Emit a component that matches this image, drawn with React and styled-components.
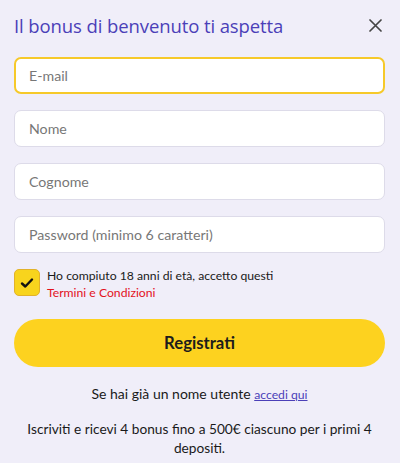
import React, { useState } from "react";
import styled, { createGlobalStyle } from "styled-components";

const GlobalStyle = createGlobalStyle`
  html, body {
    margin: 0;
    padding: 0;
    background: #f0eef9;
  }
  * {
    box-sizing: border-box;
  }
`;

const Container = styled.div`
  display: flex;
  flex-direction: column;
  width: 400px;
  min-height: 463px;
  padding: 11px 15px 0 14px;
  font-family: Lato, "Open Sans", sans-serif;
  background: #f0eef9;
  color: #1a1a1a;
`;

const Header = styled.div`
  display: flex;
  align-items: center;
  justify-content: space-between;
  height: 28px;
  margin-bottom: 18px;
`;

const Title = styled.h2`
  margin: 0;
  font-family: "Open Sans", sans-serif;
  font-size: 18.5px;
  font-weight: 400;
  color: #4b3fb8;
  letter-spacing: -0.1px;
`;

const CloseBtn = styled.button`
  display: flex;
  align-items: center;
  justify-content: center;
  width: 22px;
  height: 22px;
  padding: 0;
  margin-right: -1px;
  border: none;
  background: none;
  cursor: pointer;
`;

const Fields = styled.div`
  display: flex;
  flex-direction: column;
  gap: 16px;
`;

const Input = styled.input`
  width: 100%;
  height: 37px;
  padding: 0 14px;
  border-radius: 7px;
  border: ${(p) => (p.$active ? "2px solid #f6c92a" : "1px solid #dddbe9")};
  padding-left: ${(p) => (p.$active ? "13px" : "14px")};
  background: #fff;
  font-family: inherit;
  font-size: 14.2px;
  color: #333;
  outline: none;

  &::placeholder {
    color: #777;
  }
`;

const CheckRow = styled.label`
  display: flex;
  align-items: flex-start;
  gap: 7px;
  margin-top: 16px;
  cursor: pointer;
`;

const CheckBox = styled.span`
  display: flex;
  align-items: center;
  justify-content: center;
  flex: 0 0 26px;
  width: 26px;
  height: 27px;
  border-radius: 5px;
  border: 1px solid #e2b22a;
  background: ${(p) => (p.$checked ? "#f8d41d" : "#fff")};
`;

const CheckText = styled.span`
  font-size: 12.2px;
  line-height: 17px;
  color: #1a1a1a;
  margin-top: -2px;
`;

const Terms = styled.a`
  display: block;
  color: #e3121d;
  text-decoration: none;
`;

const SubmitBtn = styled.button`
  width: 100%;
  height: 48px;
  margin-top: 18px;
  border: none;
  border-radius: 24px;
  background: #fdd21f;
  font-family: inherit;
  font-size: 16.7px;
  font-weight: 700;
  color: #1c1c1c;
  cursor: pointer;
`;

const LoginText = styled.p`
  margin: 17px 0 0;
  text-align: center;
  font-size: 14px;
  line-height: 20px;
`;

const LoginLink = styled.a`
  color: #4b3fb8;
  font-size: 12.2px;
  text-decoration: underline;
`;

const Promo = styled.p`
  margin: 14px 0 0;
  text-align: center;
  font-size: 13.7px;
  line-height: 19px;
`;

const App = () => {
  const [checked, setChecked] = useState(true);

  return (
    <>
      <GlobalStyle />
      <Container>
        <Header>
          <Title>Il bonus di benvenuto ti aspetta</Title>
          <CloseBtn aria-label="Chiudi">
            <svg width="13" height="13" viewBox="0 0 13 13">
              <path
                d="M1 1 L12 12 M12 1 L1 12"
                stroke="#454545"
                strokeWidth="1.7"
                strokeLinecap="round"
              />
            </svg>
          </CloseBtn>
        </Header>
        <Fields>
          <Input $active placeholder="E-mail" />
          <Input placeholder="Nome" />
          <Input placeholder="Cognome" />
          <Input type="password" placeholder="Password (minimo 6 caratteri)" />
        </Fields>
        <CheckRow onClick={() => setChecked(!checked)}>
          <CheckBox $checked={checked}>
            {checked && (
              <svg width="14" height="12" viewBox="0 0 14 12">
                <path
                  d="M2 6.5 L5.3 9.5 L12 2.5"
                  fill="none"
                  stroke="#111"
                  strokeWidth="2.4"
                  strokeLinecap="round"
                  strokeLinejoin="round"
                />
              </svg>
            )}
          </CheckBox>
          <CheckText>
            Ho compiuto 18 anni di età, accetto questi
            <Terms href="#">Termini e Condizioni</Terms>
          </CheckText>
        </CheckRow>
        <SubmitBtn>Registrati</SubmitBtn>
        <LoginText>
          Se hai già un nome utente <LoginLink href="#">accedi qui</LoginLink>
        </LoginText>
        <Promo>
          Iscriviti e ricevi 4 bonus fino a 500€ ciascuno per i primi 4
          depositi.
        </Promo>
      </Container>
    </>
  );
};

export default App;
